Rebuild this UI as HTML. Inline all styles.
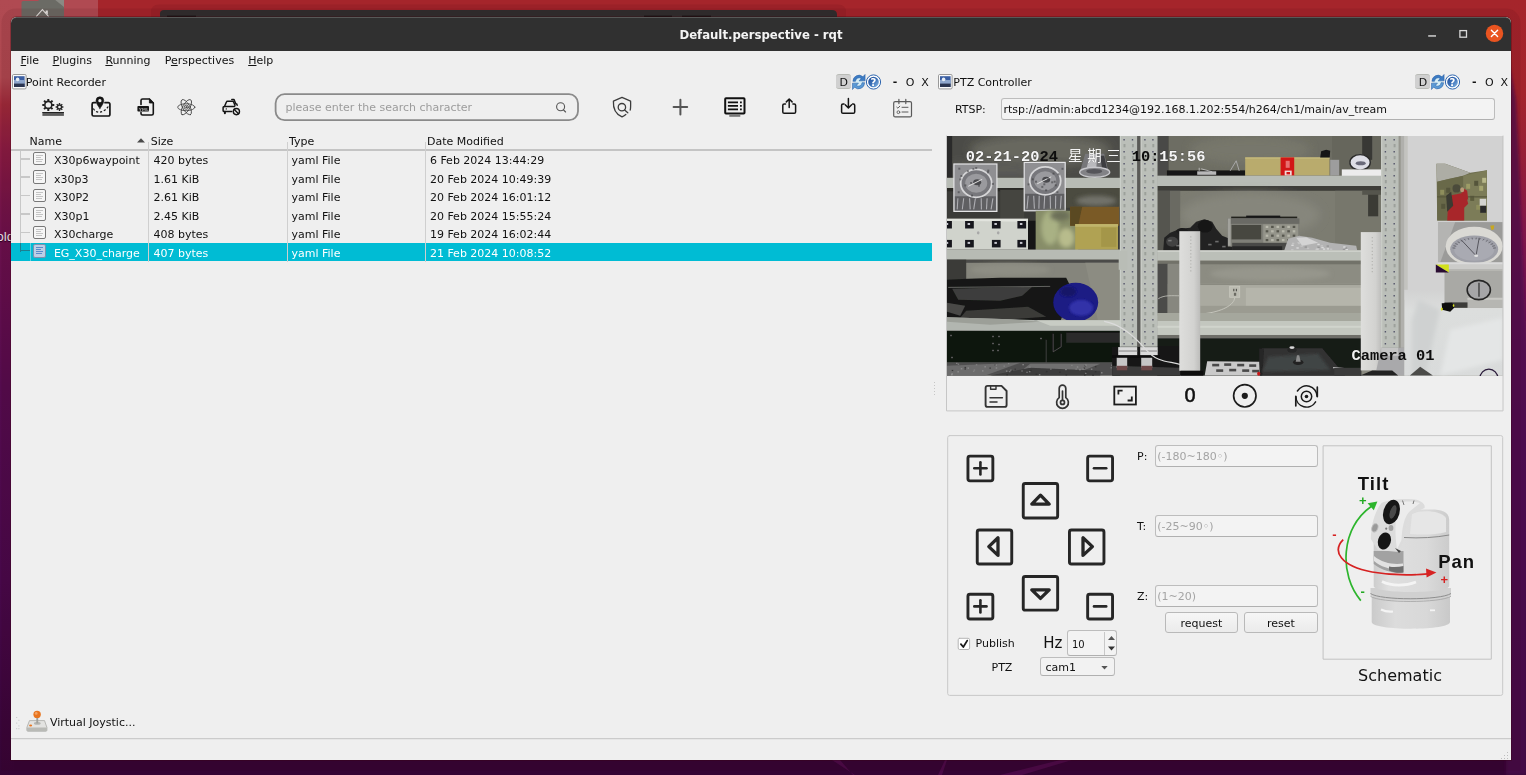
<!DOCTYPE html>
<html lang="en">
<head>
<meta charset="utf-8">
<title>Default.perspective - rqt</title>
<style>
*{box-sizing:border-box;margin:0;padding:0}
html,body{width:1526px;height:775px;overflow:hidden}
body{position:relative;font-family:"DejaVu Sans","Liberation Sans",sans-serif;font-size:11px;color:#111;background:#340434}
.abs,#win div,#win svg,#win i,#win span{position:absolute}
#win u{position:static}
.t{position:absolute;white-space:nowrap;line-height:14px;height:14px}
u{text-decoration:underline;text-underline-offset:1px}
/* wallpaper */
#wp{left:0;top:0;width:1526px;height:775px}
/* window */
#win{will-change:transform;left:11px;top:17px;width:1500px;height:743px;background:#efefef;border-radius:5.5px 5.5px 0 0;overflow:hidden;box-shadow:0 0 0 1px rgba(60,0,10,.28),0 1px 0 9.5px rgba(50,0,10,.09)}
#tb{left:0;top:0;width:1500px;height:34px;background:#303030;border-top:1px solid #575857;border-radius:5.5px 5.5px 0 0}
#title{left:0;top:9px;width:1500px;text-align:center;font-family:"DejaVu Sans Condensed","DejaVu Sans","Liberation Sans",sans-serif;font-stretch:condensed;font-weight:bold;font-size:13px;color:#f4f4f4;line-height:16px;height:16px}

#title{top:10px}
.m{top:36.9px}
.hd{top:117.8px;color:#111;margin-left:-0.8px}
.r{color:#111}
.sel{color:#fff}
#hl{left:0;top:226px;width:921px;height:18.4px;background:#00bcd4}
.vs{top:124.5px;width:1px;height:120px;background:#cfcfcf}
.hline{left:0;top:132.3px;width:921px;height:1.4px;background:#c4c4c4}
.br{left:8.5px;width:10px;height:1.6px;background:#c8c8c8}
.fi{left:22.2px;width:12.8px;height:13.6px;border:1.1px solid #787878;border-radius:2px;background:#f6f6f6}
.fi i{left:2px;height:1px;background:#c4c4c4}

.dbtn{top:57px;width:15.2px;height:14.8px;background:#d0d0d0;border-radius:3px;border-top:1px solid #b9bbb6;border-bottom:1px solid #b9bbb6}
.dk{top:58.9px}
.inp{border:1px solid #bdbdbd;border-bottom-color:#b0b0b0;border-radius:3px;background:#f3f3f3}
.btn{border:1px solid #b9b9b9;border-radius:3px;background:linear-gradient(#f6f6f6,#ebebeb);text-align:center;font-size:11px;line-height:21.4px;color:#111}
.fis{background:#bccfe6 !important;border-color:#7d8fae !important}
.fis i{background:#5b8ccb !important}
.brs{background:#1d7f90 !important;height:1px !important}
</style>
</head>
<body>
<!-- ===== WALLPAPER ===== -->
<svg id="wp" class="abs" width="1526" height="775" viewBox="0 0 1526 775">
<defs>
<filter id="wb" x="-50%" y="-5%" width="200%" height="110%"><feGaussianBlur stdDeviation="1.6"/></filter>
<linearGradient id="gL" x1="0" y1="0" x2="0" y2="1">
<stop offset="0" stop-color="#b04a52"/><stop offset="0.1" stop-color="#ae4850"/><stop offset="0.135" stop-color="#9e2a3a"/><stop offset="0.19" stop-color="#8a1c42"/><stop offset="0.26" stop-color="#741448"/><stop offset="0.31" stop-color="#6a104c"/><stop offset="0.5" stop-color="#540b4e"/><stop offset="0.75" stop-color="#47084a"/><stop offset="1" stop-color="#340434"/>
</linearGradient>
<linearGradient id="gR" x1="0" y1="0" x2="0" y2="1">
<stop offset="0" stop-color="#a5252b"/><stop offset="0.12" stop-color="#a3242c"/><stop offset="0.2" stop-color="#961f36"/><stop offset="0.3" stop-color="#80174a"/><stop offset="0.42" stop-color="#6a1150"/><stop offset="0.58" stop-color="#500a52"/><stop offset="0.8" stop-color="#3e0642"/><stop offset="1" stop-color="#340434"/>
</linearGradient>
</defs>
<rect x="0" y="0" width="1526" height="775" fill="#340434"/>
<rect x="0" y="0" width="1526" height="60" fill="#a5252b"/>
<rect x="0" y="0" width="14" height="775" fill="url(#gL)"/>
<rect x="1508" y="0" width="18" height="775" fill="url(#gR)"/>
<path d="M1506 45L1516 100L1519 160L1522 240L1527 350V775H1506Z" fill="#4c0a4e" opacity="0.72" filter="url(#wb)"/>
<path d="M855 775L832 760H840L853 775ZM938 775L945 760H947L942 775ZM1000 775L1060 760H1072L1022 775Z" fill="#4a0a48"/>
</svg>

<!-- desktop items behind window -->
<svg class="abs" style="left:0;top:0" width="900" height="20" viewBox="0 0 900 20">
<rect x="14" y="0" width="84" height="17" fill="#b04a52"/>
<path d="M21.5 17V2.5Q21.5 1 23 1H38L41 -2H64V17Z" fill="#6b6b65"/>
<path d="M54 -1H64V7Z" fill="#8a8a84"/>
<path d="M36.2 16.5L42.4 9.6L48.6 16.5M46.2 13V11H47.3V14.2" fill="none" stroke="#e8e8e4" stroke-width="1.1"/>
<path d="M151 20V12Q151 4.5 159 4.5H838Q846 4.5 846 12V20Z" fill="#3a000c" opacity="0.09"/>
<path d="M160 17V13.5Q160 10 164 10H832Q836.5 10 837 14V17Z" fill="#2f2f2f"/>
<rect x="167" y="15.6" width="29" height="1.4" fill="#161616"/><rect x="644" y="15.6" width="28" height="1.4" fill="#161616"/><rect x="682" y="15.6" width="29" height="1.4" fill="#161616"/>
</svg>
<div class="t abs" style="left:-7.5px;top:228.5px;font-family:'Liberation Sans','DejaVu Sans',sans-serif;font-size:13.5px;line-height:16px;height:16px;color:#f0e8ee;text-shadow:0 1px 1px #200020">fold</div>
<!-- ===== MAIN WINDOW ===== -->
<div id="win" class="abs">
<div id="tb"></div>
<div id="title" class="t">Default.perspective - rqt</div>
<!-- menubar -->
<div class="t m" style="left:9.6px"><u>F</u>ile</div>
<div class="t m" style="left:41.6px"><u>P</u>lugins</div>
<div class="t m" style="left:94.4px"><u>R</u>unning</div>
<div class="t m" style="left:153.7px">P<u>e</u>rspectives</div>
<div class="t m" style="left:237.2px"><u>H</u>elp</div>
<!-- dock title: Point Recorder -->
<div class="t" style="left:14.8px;top:58.9px">Point Recorder</div>
<!-- left dock title -->
<svg style="left:0.6px;top:56.6px" width="15" height="16" viewBox="0 0 15 16"><rect x="0.5" y="0.5" width="13.6" height="14.4" rx="1.2" fill="#fbfbfb" stroke="#8e8e8e" stroke-width="0.9"/><rect x="2" y="2.2" width="10.6" height="10.8" fill="#3a5ea2"/><rect x="2" y="6" width="10.6" height="4" fill="#8ea6cc"/><rect x="2" y="9.6" width="10.6" height="3.4" fill="#2b3550"/><circle cx="5.6" cy="5.4" r="1.8" fill="#e6edf6"/></svg>
<div class="dbtn" style="left:825.0px"></div>
<div class="t dk" style="left:828.4px">D</div>
<svg style="left:841.0px;top:56.5px" width="30" height="16" viewBox="0 0 30 16"><defs><linearGradient id="hg0" x1="0" y1="0" x2="1" y2="1"><stop offset="0" stop-color="#244f96"/><stop offset="0.5" stop-color="#3a70b8"/><stop offset="1" stop-color="#8fbde6"/></linearGradient></defs><g transform="translate(6.7 8) scale(1.08 1.14) translate(-6.7 -8)"><circle cx="6.7" cy="8" r="4.4" fill="#d6eef6" stroke="none"/><path d="M1.3 7.4A5.6 5.6 0 0 1 10.6 3.4L12.6 1.4V7H7L9 5A3.3 3.3 0 0 0 3.7 7.4Z" fill="#3d7cc4" stroke="#2c62a6" stroke-width="0.5"/><path d="M12.2 8.6A5.6 5.6 0 0 1 2.9 12.6L0.9 14.6V9H6.5L4.5 11A3.3 3.3 0 0 0 9.8 8.6Z" fill="#5b9ad6" stroke="#2c62a6" stroke-width="0.5"/></g><circle cx="21.5" cy="8" r="7.1" fill="#fff" stroke="#2f66ae" stroke-width="1"/><circle cx="21.5" cy="8" r="5.3" fill="url(#hg0)"/><text x="21.5" y="11.7" text-anchor="middle" font-family="DejaVu Sans,Liberation Sans,sans-serif" font-weight="bold" font-size="10" fill="#fff">?</text></svg>
<div class="t dk" style="left:881.7px;font-weight:bold;margin-top:-0.7px">-</div>
<div class="t dk" style="left:894.7px">O</div>
<div class="t dk" style="left:910.3px">X</div>
<!-- right dock title -->
<svg style="left:927.2px;top:56.8px" width="15" height="16" viewBox="0 0 15 16"><rect x="0.5" y="0.5" width="13.6" height="14.4" rx="1.2" fill="#fbfbfb" stroke="#8e8e8e" stroke-width="0.9"/><rect x="2" y="2.2" width="10.6" height="10.8" fill="#3a5ea2"/><rect x="2" y="6" width="10.6" height="4" fill="#8ea6cc"/><rect x="2" y="9.6" width="10.6" height="3.4" fill="#2b3550"/><circle cx="5.6" cy="5.4" r="1.8" fill="#e6edf6"/></svg>
<div class="t dk" style="left:942.3px">PTZ Controller</div>
<div class="dbtn" style="left:1404.3px"></div>
<div class="t dk" style="left:1407.7px">D</div>
<svg style="left:1420.3px;top:56.5px" width="30" height="16" viewBox="0 0 30 16"><defs><linearGradient id="hg579" x1="0" y1="0" x2="1" y2="1"><stop offset="0" stop-color="#244f96"/><stop offset="0.5" stop-color="#3a70b8"/><stop offset="1" stop-color="#8fbde6"/></linearGradient></defs><g transform="translate(6.7 8) scale(1.08 1.14) translate(-6.7 -8)"><circle cx="6.7" cy="8" r="4.4" fill="#d6eef6" stroke="none"/><path d="M1.3 7.4A5.6 5.6 0 0 1 10.6 3.4L12.6 1.4V7H7L9 5A3.3 3.3 0 0 0 3.7 7.4Z" fill="#3d7cc4" stroke="#2c62a6" stroke-width="0.5"/><path d="M12.2 8.6A5.6 5.6 0 0 1 2.9 12.6L0.9 14.6V9H6.5L4.5 11A3.3 3.3 0 0 0 9.8 8.6Z" fill="#5b9ad6" stroke="#2c62a6" stroke-width="0.5"/></g><circle cx="21.5" cy="8" r="7.1" fill="#fff" stroke="#2f66ae" stroke-width="1"/><circle cx="21.5" cy="8" r="5.3" fill="url(#hg579)"/><text x="21.5" y="11.7" text-anchor="middle" font-family="DejaVu Sans,Liberation Sans,sans-serif" font-weight="bold" font-size="10" fill="#fff">?</text></svg>
<div class="t dk" style="left:1461.0px;font-weight:bold;margin-top:-0.7px">-</div>
<div class="t dk" style="left:1474.0px">O</div>
<div class="t dk" style="left:1489.6px">X</div>
<!-- RTSP row -->
<div class="t" style="left:943.9px;top:85.8px">RTSP:</div>
<div class="inp" style="left:989.5px;top:81.2px;width:494.3px;height:22.2px"></div>
<div class="t" style="left:992.4px;top:85.8px">rtsp://admin:abcd1234@192.168.1.202:554/h264/ch1/main/av_tream</div>
<!-- CAM_START -->
<svg id="cam" style="left:935.8px;top:119.2px" width="555.9" height="239.6" viewBox="946.8 136.2 555.9 239.6">
<defs><filter id="b1" x="-20%" y="-20%" width="140%" height="140%"><feGaussianBlur stdDeviation="1"/></filter><filter id="b2" x="-30%" y="-30%" width="160%" height="160%"><feGaussianBlur stdDeviation="2.2"/></filter><filter id="b4" x="-30%" y="-50%" width="160%" height="200%"><feGaussianBlur stdDeviation="5"/></filter><filter id="soft" x="0" y="0" width="100%" height="100%"><feGaussianBlur stdDeviation="0.55"/></filter><linearGradient id="pg" x1="0" y1="0" x2="1" y2="0"><stop offset="0" stop-color="#dededc"/><stop offset="0.7" stop-color="#d2d2d0"/><stop offset="1" stop-color="#bcbcba"/></linearGradient><linearGradient id="cl" x1="0" y1="0" x2="0" y2="1"><stop offset="0" stop-color="#d2d2d2"/><stop offset="0.25" stop-color="#dcdedd"/><stop offset="1" stop-color="#d9dbdb"/></linearGradient></defs>
<g filter="url(#soft)">
<rect x="946.8" y="136.2" width="555.9" height="239.6" fill="#8a8a80" />
<rect x="946.8" y="136.2" width="173.2" height="42.3" fill="#4c4c47" />
<ellipse cx="1040" cy="150" rx="70" ry="16" fill="#68685f" filter="url(#b4)"/>
<ellipse cx="1000" cy="170" rx="60" ry="8" fill="#5c5c58" filter="url(#b4)"/>
<rect x="946.8" y="136.0" width="5.2" height="44.0" fill="#2c2c2a" />
<polygon points="1085,154 1104,154 1108,171 1080,171" fill="#77777a" />
<polygon points="1090,154 1097,154 1096,170 1086,170" fill="#b9b9bd" />
<polygon points="1100,156 1104,156 1107,170 1102,170" fill="#3c3c40" />
<ellipse cx="1094.5" cy="172.5" rx="15" ry="5" fill="#828286" stroke="#c8c8cc" stroke-width="1.4"/>
<ellipse cx="1094" cy="171.5" rx="8" ry="2.4" fill="#55555a" />
<rect x="946.8" y="178.0" width="173.2" height="10.2" fill="#b8bcb5" />
<rect x="946.8" y="188.2" width="173.2" height="61.8" fill="#3b3b37" />
<rect x="946.8" y="188.2" width="173.2" height="3.3" fill="#2a2a28" />
<rect x="1000.0" y="190.0" width="24.0" height="29.0" fill="#45453f" />
<rect x="953.7" y="164.2" width="43.0" height="47.4" fill="#8f8f92" stroke="#e4e4e6" stroke-width="1.2"/>
<rect x="954.7" y="196.5" width="41.0" height="14.1" fill="#5e5e62" />
<path d="M957.7 198.5L957.0 209.6" fill="none" stroke="#c8c8cc" stroke-width="1.1" opacity="0.75"/>
<path d="M963.5 198.5L962.1 209.6" fill="none" stroke="#c8c8cc" stroke-width="1.1" opacity="0.75"/>
<path d="M969.4 198.5L970.0 209.6" fill="none" stroke="#c8c8cc" stroke-width="1.1" opacity="0.75"/>
<path d="M975.2 198.5L973.5 209.6" fill="none" stroke="#c8c8cc" stroke-width="1.1" opacity="0.75"/>
<path d="M981.0 198.5L981.2 209.6" fill="none" stroke="#c8c8cc" stroke-width="1.1" opacity="0.75"/>
<path d="M986.9 198.5L986.3 209.6" fill="none" stroke="#c8c8cc" stroke-width="1.1" opacity="0.75"/>
<path d="M992.7 198.5L990.9 209.6" fill="none" stroke="#c8c8cc" stroke-width="1.1" opacity="0.75"/>
<ellipse cx="976" cy="183.5" rx="15.5" ry="14" fill="#77777b" stroke="#d6d6d8" stroke-width="1.8"/>
<ellipse cx="976" cy="183.5" rx="11" ry="9.5" fill="#9a9a9e" />
<ellipse cx="977" cy="182.5" rx="4" ry="3" fill="#4a4a4e" />
<path d="M968 186.5L982 179.5" fill="none" stroke="#e0e0e0" stroke-width="1" />
<rect x="975.0" y="167.3" width="2.0" height="2.0" fill="#3a3a3e" opacity="0.55"/>
<rect x="972.2" y="168.2" width="2.0" height="2.0" fill="#3a3a3e" opacity="0.55"/>
<rect x="959.1" y="178.6" width="2.0" height="2.0" fill="#3a3a3e" opacity="0.55"/>
<rect x="987.1" y="169.8" width="2.0" height="2.0" fill="#3a3a3e" opacity="0.55"/>
<rect x="964.2" y="184.6" width="2.0" height="2.0" fill="#3a3a3e" opacity="0.55"/>
<rect x="991.7" y="183.1" width="2.0" height="2.0" fill="#3a3a3e" opacity="0.55"/>
<rect x="970.8" y="194.8" width="2.0" height="2.0" fill="#3a3a3e" opacity="0.55"/>
<rect x="957.5" y="191.4" width="2.0" height="2.0" fill="#3a3a3e" opacity="0.55"/>
<rect x="966.7" y="170.4" width="2.0" height="2.0" fill="#3a3a3e" opacity="0.55"/>
<rect x="960.2" y="175.2" width="2.0" height="2.0" fill="#3a3a3e" opacity="0.55"/>
<rect x="986.7" y="171.5" width="2.0" height="2.0" fill="#3a3a3e" opacity="0.55"/>
<rect x="977.8" y="184.9" width="2.0" height="2.0" fill="#3a3a3e" opacity="0.55"/>
<rect x="969.9" y="182.2" width="2.0" height="2.0" fill="#3a3a3e" opacity="0.55"/>
<rect x="958.1" y="167.9" width="2.0" height="2.0" fill="#3a3a3e" opacity="0.55"/>
<rect x="1024.0" y="162.6" width="41.0" height="48.4" fill="#8f8f92" stroke="#e4e4e6" stroke-width="1.2"/>
<rect x="1025.0" y="194.0" width="39.0" height="16.0" fill="#5e5e62" />
<path d="M1028.0 196L1026.8 209" fill="none" stroke="#c8c8cc" stroke-width="1.1" opacity="0.75"/>
<path d="M1033.5 196L1034.2 209" fill="none" stroke="#c8c8cc" stroke-width="1.1" opacity="0.75"/>
<path d="M1039.0 196L1038.7 209" fill="none" stroke="#c8c8cc" stroke-width="1.1" opacity="0.75"/>
<path d="M1044.5 196L1043.8 209" fill="none" stroke="#c8c8cc" stroke-width="1.1" opacity="0.75"/>
<path d="M1050.0 196L1050.3 209" fill="none" stroke="#c8c8cc" stroke-width="1.1" opacity="0.75"/>
<path d="M1055.5 196L1055.3 209" fill="none" stroke="#c8c8cc" stroke-width="1.1" opacity="0.75"/>
<path d="M1061.0 196L1060.2 209" fill="none" stroke="#c8c8cc" stroke-width="1.1" opacity="0.75"/>
<ellipse cx="1045" cy="181" rx="15.5" ry="14" fill="#77777b" stroke="#d6d6d8" stroke-width="1.8"/>
<ellipse cx="1045" cy="181" rx="11" ry="9.5" fill="#9a9a9e" />
<ellipse cx="1046" cy="180" rx="4" ry="3" fill="#4a4a4e" />
<path d="M1037 184L1051 177" fill="none" stroke="#e0e0e0" stroke-width="1" />
<rect x="1054.6" y="184.5" width="2.0" height="2.0" fill="#3a3a3e" opacity="0.55"/>
<rect x="1034.8" y="180.9" width="2.0" height="2.0" fill="#3a3a3e" opacity="0.55"/>
<rect x="1044.9" y="189.5" width="2.0" height="2.0" fill="#3a3a3e" opacity="0.55"/>
<rect x="1052.3" y="172.8" width="2.0" height="2.0" fill="#3a3a3e" opacity="0.55"/>
<rect x="1061.3" y="168.0" width="2.0" height="2.0" fill="#3a3a3e" opacity="0.55"/>
<rect x="1041.1" y="186.1" width="2.0" height="2.0" fill="#3a3a3e" opacity="0.55"/>
<rect x="1031.5" y="178.5" width="2.0" height="2.0" fill="#3a3a3e" opacity="0.55"/>
<rect x="1027.4" y="183.6" width="2.0" height="2.0" fill="#3a3a3e" opacity="0.55"/>
<rect x="1053.5" y="180.9" width="2.0" height="2.0" fill="#3a3a3e" opacity="0.55"/>
<rect x="1057.5" y="173.5" width="2.0" height="2.0" fill="#3a3a3e" opacity="0.55"/>
<rect x="1051.0" y="181.5" width="2.0" height="2.0" fill="#3a3a3e" opacity="0.55"/>
<rect x="1046.9" y="177.6" width="2.0" height="2.0" fill="#3a3a3e" opacity="0.55"/>
<rect x="1056.2" y="191.4" width="2.0" height="2.0" fill="#3a3a3e" opacity="0.55"/>
<rect x="1043.1" y="183.5" width="2.0" height="2.0" fill="#3a3a3e" opacity="0.55"/>
<rect x="946.8" y="219.0" width="81.0" height="30.8" fill="#d0d3cc" />
<polygon points="946.8,219 1027.8,219 1027.8,222 946.8,221" fill="#e2e4de" />
<rect x="943.0" y="221.2" width="8.7" height="7.5" fill="#15151c" />
<rect x="945.5" y="223.2" width="2.5" height="2.0" fill="#c8c8d0" />
<rect x="964.9" y="221.2" width="8.7" height="7.5" fill="#15151c" />
<rect x="967.4" y="223.2" width="2.5" height="2.0" fill="#c8c8d0" />
<rect x="991.7" y="221.2" width="8.7" height="7.5" fill="#15151c" />
<rect x="994.2" y="223.2" width="2.5" height="2.0" fill="#c8c8d0" />
<rect x="1017.2" y="221.2" width="8.7" height="7.5" fill="#15151c" />
<rect x="1019.7" y="223.2" width="2.5" height="2.0" fill="#c8c8d0" />
<rect x="943.0" y="240.1" width="8.7" height="7.5" fill="#15151c" />
<rect x="945.5" y="242.1" width="2.5" height="2.0" fill="#c8c8d0" />
<rect x="964.9" y="240.1" width="8.7" height="7.5" fill="#15151c" />
<rect x="967.4" y="242.1" width="2.5" height="2.0" fill="#c8c8d0" />
<rect x="991.7" y="240.1" width="8.7" height="7.5" fill="#15151c" />
<rect x="994.2" y="242.1" width="2.5" height="2.0" fill="#c8c8d0" />
<rect x="1017.2" y="240.1" width="8.7" height="7.5" fill="#15151c" />
<rect x="1019.7" y="242.1" width="2.5" height="2.0" fill="#c8c8d0" />
<ellipse cx="978" cy="233" rx="1.3" ry="1.6" fill="#a8a8a8" />
<ellipse cx="998" cy="233" rx="1.3" ry="1.6" fill="#a8a8a8" />
<rect x="1027.8" y="221.0" width="7.7" height="29.0" fill="#151515" />
<rect x="1035.5" y="211.0" width="42.5" height="39.0" fill="#878d68" />
<ellipse cx="1050" cy="228" rx="9" ry="17" fill="#a9b184" filter="url(#b2)"/>
<ellipse cx="1066" cy="238" rx="8" ry="10" fill="#b8bc8c" filter="url(#b2)"/>
<ellipse cx="1060" cy="216" rx="10" ry="5" fill="#6c7058" filter="url(#b2)"/>
<rect x="1066.0" y="188.2" width="54.0" height="19.8" fill="#4b4b40" />
<ellipse cx="1096" cy="201" rx="20" ry="5" fill="#72726a" filter="url(#b2)"/>
<rect x="1070.0" y="207.0" width="49.0" height="19.0" fill="#7a5a28" />
<polygon points="1070,207 1082,207 1078,226 1070,226" fill="#5a4820" />
<rect x="1075.0" y="224.3" width="42.8" height="25.6" fill="#b0a252" />
<rect x="1075.0" y="224.3" width="42.8" height="2.7" fill="#c0b46c" />
<rect x="1101.0" y="228.0" width="15.0" height="19.0" fill="#a49648" />
<rect x="946.8" y="249.8" width="173.2" height="10.1" fill="#b7bbb4" />
<rect x="946.8" y="259.9" width="173.2" height="62.1" fill="#85857c" />
<rect x="946.8" y="259.9" width="173.2" height="3.1" fill="#4c4c48" />
<rect x="946.8" y="259.9" width="19.2" height="22.1" fill="#3a3a38" />
<ellipse cx="1010" cy="270" rx="40" ry="6" fill="#8e8e84" filter="url(#b2)"/>
<polygon points="1085,263 1120,263 1120,322 1098,322" fill="#8c8c82" />
<polygon points="946.8,280 968,279 1000,278 1066,278 1072,290 1060,322 946.8,322" fill="#161816" />
<polygon points="952,289 1032,287 1022,296 1000,301 958,300" fill="#3e3e3c" />
<polygon points="966,311 1028,307 1046,317 990,321 960,318" fill="#3a3a38" />
<polygon points="946.8,303 965,306 960,316 946.8,312" fill="#484846" />
<path d="M948 287.6L1050 286.6" fill="none" stroke="#6a6a68" stroke-width="0.9" />
<ellipse cx="1075.5" cy="302.4" rx="22.5" ry="19.5" fill="#1b1b84" />
<ellipse cx="1081" cy="308" rx="12" ry="8" fill="#3030a8" filter="url(#b1)"/>
<ellipse cx="1068" cy="292" rx="8" ry="5" fill="#141468" filter="url(#b1)"/>
<polygon points="946.8,317.5 1040,320.5 1120,320.5 1120,332 946.8,331" fill="#b2b6b0" />
<polygon points="1036,320.5 1120,320.5 1120,326 1050,326" fill="#c8ccc4" />
<polygon points="946.8,317.5 1010,319.5 1040,322 990,325 946.8,322" fill="#9c9f98" />
<rect x="946.8" y="331.0" width="173.2" height="32.0" fill="#101311" />
<rect x="1066.0" y="333.0" width="54.0" height="10.0" fill="#2a2c2a" />
<rect x="992.0" y="336.0" width="1.6" height="1.4" fill="#6a6a6a" />
<rect x="998.0" y="336.0" width="1.6" height="1.4" fill="#6a6a6a" />
<rect x="992.0" y="343.0" width="1.6" height="1.4" fill="#6a6a6a" />
<rect x="998.0" y="344.0" width="1.6" height="1.4" fill="#6a6a6a" />
<rect x="992.0" y="350.0" width="1.6" height="1.4" fill="#6a6a6a" />
<rect x="997.0" y="350.0" width="1.6" height="1.4" fill="#6a6a6a" />
<rect x="1040.0" y="338.0" width="1.6" height="1.4" fill="#6a6a6a" />
<rect x="950.0" y="335.0" width="1.6" height="1.4" fill="#6a6a6a" />
<rect x="951.0" y="357.0" width="1.6" height="1.4" fill="#6a6a6a" />
<path d="M1053 334L1053 352L1061 347L1061 334" fill="none" stroke="#5a5a58" stroke-width="0.8" />
<path d="M1046 340L1046 364" fill="none" stroke="#4a4a48" stroke-width="0.8" />
<rect x="946.8" y="362.5" width="173.2" height="13.3" fill="#505050" />
<polygon points="946.8,366 1020,363 985,375.8 946.8,375.8" fill="#6c6c6c" />
<polygon points="1030,364 1100,364 1080,372 1020,372" fill="#707070" />
<polygon points="990,375.8 1030,368 1100,371 1100,375.8" fill="#3c3c3c" />
<rect x="957.2" y="371.4" width="1.5" height="1.2" fill="#9a9a9a" opacity="0.8"/>
<rect x="1045.7" y="371.2" width="1.5" height="1.2" fill="#2e2e2e" opacity="0.8"/>
<rect x="995.5" y="367.6" width="1.5" height="1.2" fill="#9a9a9a" opacity="0.8"/>
<rect x="1006.2" y="374.3" width="1.5" height="1.2" fill="#2e2e2e" opacity="0.8"/>
<rect x="975.6" y="364.4" width="1.5" height="1.2" fill="#8a8a8a" opacity="0.8"/>
<rect x="984.2" y="366.4" width="1.5" height="1.2" fill="#9a9a9a" opacity="0.8"/>
<rect x="989.2" y="367.7" width="1.5" height="1.2" fill="#2e2e2e" opacity="0.8"/>
<rect x="960.6" y="368.4" width="1.5" height="1.2" fill="#9a9a9a" opacity="0.8"/>
<rect x="994.4" y="364.6" width="1.5" height="1.2" fill="#2e2e2e" opacity="0.8"/>
<rect x="1094.7" y="366.3" width="1.5" height="1.2" fill="#2e2e2e" opacity="0.8"/>
<rect x="1115.7" y="371.2" width="1.5" height="1.2" fill="#2e2e2e" opacity="0.8"/>
<rect x="1110.8" y="364.8" width="1.5" height="1.2" fill="#8a8a8a" opacity="0.8"/>
<rect x="972.7" y="370.9" width="1.5" height="1.2" fill="#8a8a8a" opacity="0.8"/>
<rect x="1029.8" y="370.1" width="1.5" height="1.2" fill="#2e2e2e" opacity="0.8"/>
<rect x="995.1" y="364.7" width="1.5" height="1.2" fill="#9a9a9a" opacity="0.8"/>
<rect x="1010.0" y="369.8" width="1.5" height="1.2" fill="#8a8a8a" opacity="0.8"/>
<rect x="1065.0" y="369.2" width="1.5" height="1.2" fill="#9a9a9a" opacity="0.8"/>
<rect x="1058.9" y="371.9" width="1.5" height="1.2" fill="#2e2e2e" opacity="0.8"/>
<rect x="1100.8" y="372.4" width="1.5" height="1.2" fill="#9a9a9a" opacity="0.8"/>
<rect x="1083.4" y="367.7" width="1.5" height="1.2" fill="#2e2e2e" opacity="0.8"/>
<rect x="1014.3" y="368.8" width="1.5" height="1.2" fill="#2e2e2e" opacity="0.8"/>
<rect x="957.5" y="363.8" width="1.5" height="1.2" fill="#8a8a8a" opacity="0.8"/>
<rect x="1022.2" y="364.3" width="1.5" height="1.2" fill="#9a9a9a" opacity="0.8"/>
<rect x="955.8" y="363.0" width="1.5" height="1.2" fill="#8a8a8a" opacity="0.8"/>
<rect x="1038.7" y="374.4" width="1.5" height="1.2" fill="#9a9a9a" opacity="0.8"/>
<rect x="951.2" y="373.5" width="1.5" height="1.2" fill="#9a9a9a" opacity="0.8"/>
<rect x="1011.2" y="370.6" width="1.5" height="1.2" fill="#2e2e2e" opacity="0.8"/>
<rect x="1049.9" y="368.7" width="1.5" height="1.2" fill="#8a8a8a" opacity="0.8"/>
<rect x="1092.1" y="374.9" width="1.5" height="1.2" fill="#2e2e2e" opacity="0.8"/>
<rect x="1029.0" y="366.7" width="1.5" height="1.2" fill="#8a8a8a" opacity="0.8"/>
<rect x="964.3" y="367.1" width="1.5" height="1.2" fill="#2e2e2e" opacity="0.8"/>
<rect x="1028.7" y="371.3" width="1.5" height="1.2" fill="#9a9a9a" opacity="0.8"/>
<rect x="950.8" y="374.4" width="1.5" height="1.2" fill="#9a9a9a" opacity="0.8"/>
<rect x="1008.7" y="371.3" width="1.5" height="1.2" fill="#8a8a8a" opacity="0.8"/>
<rect x="1076.6" y="366.6" width="1.5" height="1.2" fill="#9a9a9a" opacity="0.8"/>
<rect x="1094.6" y="371.4" width="1.5" height="1.2" fill="#2e2e2e" opacity="0.8"/>
<rect x="1035.5" y="373.9" width="1.5" height="1.2" fill="#2e2e2e" opacity="0.8"/>
<rect x="1079.0" y="369.4" width="1.5" height="1.2" fill="#9a9a9a" opacity="0.8"/>
<rect x="1003.2" y="365.7" width="1.5" height="1.2" fill="#8a8a8a" opacity="0.8"/>
<rect x="1084.8" y="372.8" width="1.5" height="1.2" fill="#9a9a9a" opacity="0.8"/>
<rect x="1084.3" y="365.4" width="1.5" height="1.2" fill="#2e2e2e" opacity="0.8"/>
<rect x="1007.7" y="363.3" width="1.5" height="1.2" fill="#8a8a8a" opacity="0.8"/>
<rect x="1082.1" y="368.7" width="1.5" height="1.2" fill="#8a8a8a" opacity="0.8"/>
<rect x="1065.4" y="374.5" width="1.5" height="1.2" fill="#2e2e2e" opacity="0.8"/>
<rect x="1085.2" y="371.7" width="1.5" height="1.2" fill="#2e2e2e" opacity="0.8"/>
<rect x="1110.3" y="367.4" width="1.5" height="1.2" fill="#8a8a8a" opacity="0.8"/>
<rect x="964.3" y="368.6" width="1.5" height="1.2" fill="#2e2e2e" opacity="0.8"/>
<rect x="981.8" y="370.5" width="1.5" height="1.2" fill="#9a9a9a" opacity="0.8"/>
<rect x="1090.7" y="368.8" width="1.5" height="1.2" fill="#9a9a9a" opacity="0.8"/>
<rect x="1005.7" y="370.7" width="1.5" height="1.2" fill="#9a9a9a" opacity="0.8"/>
<rect x="967.3" y="367.7" width="1.5" height="1.2" fill="#9a9a9a" opacity="0.8"/>
<rect x="1075.2" y="368.7" width="1.5" height="1.2" fill="#8a8a8a" opacity="0.8"/>
<rect x="1021.1" y="370.6" width="1.5" height="1.2" fill="#8a8a8a" opacity="0.8"/>
<rect x="1083.9" y="374.7" width="1.5" height="1.2" fill="#2e2e2e" opacity="0.8"/>
<rect x="1026.1" y="371.9" width="1.5" height="1.2" fill="#8a8a8a" opacity="0.8"/>
<rect x="1070.9" y="365.0" width="1.5" height="1.2" fill="#8a8a8a" opacity="0.8"/>
<rect x="951.5" y="370.1" width="1.5" height="1.2" fill="#2e2e2e" opacity="0.8"/>
<rect x="1084.9" y="364.8" width="1.5" height="1.2" fill="#9a9a9a" opacity="0.8"/>
<rect x="1114.6" y="370.9" width="1.5" height="1.2" fill="#2e2e2e" opacity="0.8"/>
<rect x="973.5" y="369.6" width="1.5" height="1.2" fill="#8a8a8a" opacity="0.8"/>
<rect x="1157.0" y="136.2" width="224.0" height="39.8" fill="#6d6d63" />
<ellipse cx="1250" cy="150" rx="60" ry="14" fill="#77776c" filter="url(#b4)"/>
<rect x="1157.0" y="136.2" width="11.5" height="39.8" fill="#4a4a46" />
<rect x="1332.0" y="136.2" width="49.0" height="39.8" fill="#66665c" />
<rect x="1362.0" y="136.2" width="10.0" height="23.8" fill="#383834" />
<rect x="1166.7" y="170.6" width="78.3" height="5.4" fill="#141414" />
<rect x="1197.0" y="171.5" width="19.0" height="3.5" fill="#b8b8b8" />
<path d="M1230 171L1236 161L1239 171" fill="none" stroke="#a8a8a8" stroke-width="1" />
<path d="M1199 168L1199 171M1201 169L1212 172" fill="none" stroke="#c8c8c8" stroke-width="0.8" />
<rect x="1245.0" y="157.6" width="84.3" height="18.1" fill="#b9ab6d" />
<rect x="1245.0" y="157.6" width="84.3" height="1.4" fill="#c4b87c" />
<rect x="1280.4" y="157.6" width="13.6" height="18.1" fill="#d21717" />
<rect x="1284.5" y="170.8" width="7.0" height="4.9" fill="#f0d8d8" />
<rect x="1286.3" y="172.2" width="3.5" height="2.4" fill="#d21717" />
<rect x="1285.5" y="161.0" width="4.0" height="7.0" fill="#e87070" />
<polygon points="1320,157.6 1321,151.5 1326,150 1330,151 1329.5,157.6" fill="#161616" />
<rect x="1330.0" y="160.0" width="9.0" height="15.7" fill="#9d9d9d" />
<ellipse cx="1359.9" cy="162.6" rx="10.2" ry="7.8" fill="#dedee6" stroke="#2c2c2c" stroke-width="1.4"/>
<ellipse cx="1360.5" cy="163.5" rx="5" ry="2" fill="#6a6a7a" />
<rect x="1341.6" y="169.6" width="39.4" height="6.7" fill="#ececec" />
<rect x="1157.0" y="175.9" width="224.0" height="10.3" fill="#b8bcb6" />
<rect x="1157.0" y="186.2" width="224.0" height="64.8" fill="#7b7b71" />
<rect x="1157.0" y="186.2" width="224.0" height="4.8" fill="#3d3d39" />
<ellipse cx="1250" cy="215" rx="70" ry="22" fill="#86867b" filter="url(#b4)"/>
<rect x="1157.0" y="191.0" width="13.0" height="60.0" fill="#55554f" />
<rect x="1170.0" y="191.0" width="10.0" height="60.0" fill="#6a6a62" />
<rect x="1335.0" y="191.0" width="46.0" height="60.0" fill="#77776c" />
<rect x="1367.9" y="192.0" width="10.1" height="24.5" fill="#3a3a36" />
<rect x="1362.0" y="191.0" width="19.0" height="4.0" fill="#55554d" />
<polygon points="1163,250.6 1164,238 1170,233 1180,229 1190,228 1196,222 1204,219.5 1212,222 1216,229 1222,236 1232,240 1258,243 1262,250.6" fill="#242424" />
<ellipse cx="1205" cy="226.5" rx="7.5" ry="6.5" fill="#191919" />
<ellipse cx="1182" cy="231.5" rx="6" ry="3.2" fill="#1c1c1c" />
<ellipse cx="1172" cy="242" rx="6" ry="5" fill="#505050" opacity="0.7"/>
<rect x="1168.0" y="240.0" width="3.4" height="1.6" fill="#8e8e8e" opacity="0.7"/>
<rect x="1176.0" y="245.0" width="3.4" height="1.6" fill="#8e8e8e" opacity="0.7"/>
<rect x="1186.0" y="243.0" width="3.4" height="1.6" fill="#8e8e8e" opacity="0.7"/>
<rect x="1194.0" y="238.0" width="3.4" height="1.6" fill="#8e8e8e" opacity="0.7"/>
<rect x="1215.0" y="241.0" width="3.4" height="1.6" fill="#8e8e8e" opacity="0.7"/>
<rect x="1222.0" y="246.0" width="3.4" height="1.6" fill="#8e8e8e" opacity="0.7"/>
<rect x="1240.0" y="247.0" width="3.4" height="1.6" fill="#8e8e8e" opacity="0.7"/>
<rect x="1252.0" y="245.0" width="3.4" height="1.6" fill="#8e8e8e" opacity="0.7"/>
<rect x="1208.0" y="244.0" width="3.4" height="1.6" fill="#8e8e8e" opacity="0.7"/>
<rect x="1230.0" y="245.0" width="3.4" height="1.6" fill="#8e8e8e" opacity="0.7"/>
<rect x="1227.7" y="218.6" width="71.5" height="28.2" fill="#7f7f78" />
<rect x="1231.0" y="216.8" width="66.0" height="1.8" fill="#20201e" />
<rect x="1246.0" y="215.8" width="34.0" height="1.8" fill="#151515" />
<rect x="1227.7" y="218.6" width="71.5" height="5.4" fill="#6b6b65" />
<rect x="1227.7" y="218.6" width="2.8" height="27.4" fill="#a2a29c" />
<rect x="1231.4" y="225.2" width="29.6" height="14.4" fill="#474741" />
<rect x="1263.0" y="224.5" width="35.0" height="19.5" fill="#94948a" />
<rect x="1265.5" y="226.0" width="2.6" height="2.2" fill="#b8b8ac" />
<rect x="1270.9" y="226.0" width="2.6" height="2.2" fill="#56564e" />
<rect x="1276.3" y="226.0" width="2.6" height="2.2" fill="#b8b8ac" />
<rect x="1281.7" y="226.0" width="2.6" height="2.2" fill="#56564e" />
<rect x="1287.1" y="226.0" width="2.6" height="2.2" fill="#b8b8ac" />
<rect x="1292.5" y="226.0" width="2.6" height="2.2" fill="#56564e" />
<rect x="1265.5" y="230.4" width="2.6" height="2.2" fill="#56564e" />
<rect x="1270.9" y="230.4" width="2.6" height="2.2" fill="#b8b8ac" />
<rect x="1276.3" y="230.4" width="2.6" height="2.2" fill="#56564e" />
<rect x="1281.7" y="230.4" width="2.6" height="2.2" fill="#b8b8ac" />
<rect x="1287.1" y="230.4" width="2.6" height="2.2" fill="#56564e" />
<rect x="1292.5" y="230.4" width="2.6" height="2.2" fill="#b8b8ac" />
<rect x="1265.5" y="234.8" width="2.6" height="2.2" fill="#b8b8ac" />
<rect x="1270.9" y="234.8" width="2.6" height="2.2" fill="#56564e" />
<rect x="1276.3" y="234.8" width="2.6" height="2.2" fill="#b8b8ac" />
<rect x="1281.7" y="234.8" width="2.6" height="2.2" fill="#56564e" />
<rect x="1287.1" y="234.8" width="2.6" height="2.2" fill="#b8b8ac" />
<rect x="1292.5" y="234.8" width="2.6" height="2.2" fill="#56564e" />
<rect x="1265.5" y="239.2" width="2.6" height="2.2" fill="#56564e" />
<rect x="1270.9" y="239.2" width="2.6" height="2.2" fill="#b8b8ac" />
<rect x="1276.3" y="239.2" width="2.6" height="2.2" fill="#56564e" />
<rect x="1281.7" y="239.2" width="2.6" height="2.2" fill="#b8b8ac" />
<rect x="1287.1" y="239.2" width="2.6" height="2.2" fill="#56564e" />
<rect x="1292.5" y="239.2" width="2.6" height="2.2" fill="#b8b8ac" />
<rect x="1232.0" y="243.0" width="68.0" height="7.6" fill="#4a4a46" />
<rect x="1232.0" y="246.5" width="50.0" height="4.1" fill="#262626" />
<polygon points="1288,239 1299,236 1312,238 1330,243 1356,246 1357,250.6 1284,250.6" fill="#b3b3b3" />
<polygon points="1296,238 1306,237.5 1318,243 1302,246" fill="#d4d4d4" />
<rect x="1290.9" y="249.3" width="2.4" height="1.4" fill="#c8c8c8" opacity="0.8"/>
<rect x="1296.2" y="247.5" width="2.4" height="1.4" fill="#e4e4e4" opacity="0.8"/>
<rect x="1316.0" y="248.7" width="2.4" height="1.4" fill="#e4e4e4" opacity="0.8"/>
<rect x="1291.7" y="242.9" width="2.4" height="1.4" fill="#c8c8c8" opacity="0.8"/>
<rect x="1304.4" y="246.6" width="2.4" height="1.4" fill="#8c8c8c" opacity="0.8"/>
<rect x="1322.7" y="248.6" width="2.4" height="1.4" fill="#e4e4e4" opacity="0.8"/>
<rect x="1344.6" y="247.5" width="2.4" height="1.4" fill="#8c8c8c" opacity="0.8"/>
<rect x="1329.7" y="248.7" width="2.4" height="1.4" fill="#c8c8c8" opacity="0.8"/>
<rect x="1315.2" y="249.0" width="2.4" height="1.4" fill="#c8c8c8" opacity="0.8"/>
<rect x="1297.8" y="243.0" width="2.4" height="1.4" fill="#c8c8c8" opacity="0.8"/>
<rect x="1291.1" y="244.8" width="2.4" height="1.4" fill="#e4e4e4" opacity="0.8"/>
<rect x="1326.5" y="248.4" width="2.4" height="1.4" fill="#e4e4e4" opacity="0.8"/>
<rect x="1300.3" y="245.6" width="2.4" height="1.4" fill="#c8c8c8" opacity="0.8"/>
<rect x="1297.2" y="242.2" width="2.4" height="1.4" fill="#c8c8c8" opacity="0.8"/>
<rect x="1321.1" y="247.1" width="2.4" height="1.4" fill="#e4e4e4" opacity="0.8"/>
<rect x="1343.0" y="246.5" width="2.4" height="1.4" fill="#e4e4e4" opacity="0.8"/>
<rect x="1306.6" y="247.9" width="2.4" height="1.4" fill="#c8c8c8" opacity="0.8"/>
<rect x="1317.1" y="243.9" width="2.4" height="1.4" fill="#e4e4e4" opacity="0.8"/>
<rect x="1316.6" y="247.2" width="2.4" height="1.4" fill="#c8c8c8" opacity="0.8"/>
<rect x="1326.4" y="245.6" width="2.4" height="1.4" fill="#8c8c8c" opacity="0.8"/>
<rect x="1317.1" y="246.8" width="2.4" height="1.4" fill="#8c8c8c" opacity="0.8"/>
<rect x="1320.5" y="245.4" width="2.4" height="1.4" fill="#c8c8c8" opacity="0.8"/>
<rect x="1342.6" y="249.3" width="2.4" height="1.4" fill="#8c8c8c" opacity="0.8"/>
<rect x="1345.4" y="249.2" width="2.4" height="1.4" fill="#e4e4e4" opacity="0.8"/>
<rect x="1157.0" y="250.6" width="204.0" height="10.4" fill="#bbbfb8" />
<rect x="1157.0" y="250.6" width="204.0" height="1.4" fill="#d2d5cf" />
<rect x="1157.0" y="261.0" width="204.0" height="55.0" fill="#a3a399" />
<rect x="1157.0" y="261.0" width="204.0" height="23.0" fill="#8c8c82" />
<ellipse cx="1270" cy="274" rx="60" ry="7" fill="#96968c" filter="url(#b2)"/>
<rect x="1157.0" y="261.0" width="204.0" height="3.5" fill="#727269" />
<rect x="1157.0" y="264.0" width="10.5" height="52.0" fill="#4b4b49" />
<rect x="1167.5" y="264.0" width="12.5" height="52.0" fill="#87877f" />
<rect x="1200.0" y="284.0" width="161.0" height="1.3" fill="#8a8a80" />
<rect x="1200.0" y="285.3" width="161.0" height="27.7" fill="#aaaaa0" />
<rect x="1245.7" y="288.0" width="115.3" height="22.5" fill="#b5b5ab" />
<rect x="1200.0" y="306.0" width="161.0" height="7.5" fill="#9b9b91" />
<rect x="1229.5" y="286.5" width="10.0" height="11.0" fill="#bcbcb2" stroke="#c8c8be" stroke-width="0.8"/>
<rect x="1233.0" y="289.0" width="1.2" height="2.5" fill="#55554f" />
<rect x="1235.6" y="289.0" width="1.2" height="2.5" fill="#55554f" />
<rect x="1233.7" y="293.0" width="2.3" height="3.0" fill="#6a6a62" />
<path d="M1234.5 298C1234 305 1222 312 1203 314" fill="none" stroke="#c8c8c0" stroke-width="0.9" />
<rect x="1157.0" y="313.2" width="204.0" height="8.0" fill="#a5a79d" />
<rect x="1157.0" y="321.2" width="204.0" height="14.0" fill="#c3c7bf" />
<rect x="1157.0" y="326.0" width="204.0" height="2.0" fill="#d0d4cc" />
<rect x="1157.0" y="335.2" width="204.0" height="40.6" fill="#181a18" />
<rect x="1157.0" y="335.2" width="204.0" height="3.4" fill="#6e6e68" />
<polygon points="1262,348.5 1322,348.5 1345,375.8 1259,375.8" fill="#333333" />
<polygon points="1259,349 1264,348.5 1262,375.8 1259,375.8" fill="#252525" />
<polygon points="1268,357 1318,354 1330,370 1262,372" fill="#404444" filter="url(#b1)"/>
<ellipse cx="1291.8" cy="350.2" rx="4.6" ry="2.6" fill="#262626" />
<ellipse cx="1291.8" cy="347.8" rx="2.6" ry="1.3" fill="#d8d8d8" />
<ellipse cx="1298" cy="362.5" rx="5.2" ry="2.8" fill="#222" />
<polygon points="1296.8,355.5 1299,355.5 1300.5,362 1295.5,362" fill="#8c8c8c" />
<polygon points="1207,361.5 1259,362 1259.5,375.8 1204.5,375.8" fill="#c9c9c9" />
<rect x="1212.0" y="364.0" width="7.0" height="2.6" fill="#4a4a4a" />
<rect x="1224.0" y="363.5" width="7.0" height="2.6" fill="#4a4a4a" />
<rect x="1237.0" y="364.0" width="7.0" height="2.6" fill="#4a4a4a" />
<rect x="1249.0" y="364.5" width="7.0" height="2.6" fill="#4a4a4a" />
<rect x="1216.0" y="369.5" width="7.0" height="2.6" fill="#4a4a4a" />
<rect x="1229.0" y="369.0" width="7.0" height="2.6" fill="#4a4a4a" />
<rect x="1242.0" y="369.5" width="7.0" height="2.6" fill="#4a4a4a" />
<rect x="1252.0" y="370.0" width="7.0" height="2.6" fill="#4a4a4a" />
<ellipse cx="1258.5" cy="374" rx="1.6" ry="2" fill="#c81818" />
<path d="M1333 367.8L1361 370.2" fill="none" stroke="#cfcfcf" stroke-width="1.2" />
<rect x="1334.0" y="368.0" width="27.0" height="7.8" fill="#3a3a3a" />
<rect x="1135.8" y="136.2" width="4.8" height="210.8" fill="#5a5a57" />
<rect x="1119.7" y="136.2" width="17.2" height="211.3" fill="#bbbfb9" />
<rect x="1119.7" y="136.2" width="1.0" height="211.3" fill="#cdd1cb" />
<path d="M1123.9 139.2V345.5" fill="none" stroke="#3a3a55" stroke-width="1.4" stroke-dasharray="1.5 10.5" opacity="0.8"/>
<path d="M1124.3 144.2V345.5" fill="none" stroke="#979b95" stroke-width="1.9" stroke-dasharray="3.2 8.8" opacity="0.85"/>
<path d="M1132.3 139.2V345.5" fill="none" stroke="#3a3a55" stroke-width="1.4" stroke-dasharray="1.5 10.5" opacity="0.8"/>
<path d="M1132.7 144.2V345.5" fill="none" stroke="#979b95" stroke-width="1.9" stroke-dasharray="3.2 8.8" opacity="0.85"/>
<rect x="1140.5" y="136.2" width="16.8" height="211.3" fill="#bbbfb9" />
<rect x="1140.5" y="136.2" width="1.0" height="211.3" fill="#cdd1cb" />
<path d="M1144.7 139.2V345.5" fill="none" stroke="#3a3a55" stroke-width="1.4" stroke-dasharray="1.5 10.5" opacity="0.8"/>
<path d="M1145.1 144.2V345.5" fill="none" stroke="#979b95" stroke-width="1.9" stroke-dasharray="3.2 8.8" opacity="0.85"/>
<path d="M1152.7 139.2V345.5" fill="none" stroke="#3a3a55" stroke-width="1.4" stroke-dasharray="1.5 10.5" opacity="0.8"/>
<path d="M1153.1 144.2V345.5" fill="none" stroke="#979b95" stroke-width="1.9" stroke-dasharray="3.2 8.8" opacity="0.85"/>
<rect x="1112.0" y="347.0" width="68.0" height="28.8" fill="#141614" />
<polygon points="1112,366 1180,368 1180,375.8 1112,375.8" fill="#3a3a3a" />
<rect x="1118.5" y="251.0" width="8.5" height="19.0" fill="#b9bdb6" />
<rect x="1118.0" y="347.3" width="19.0" height="8.2" fill="#dadada" />
<rect x="1140.0" y="347.3" width="17.5" height="8.2" fill="#dadada" />
<rect x="1118.0" y="350.5" width="19.0" height="1.5" fill="#a0a0a0" />
<rect x="1140.0" y="350.5" width="17.5" height="1.5" fill="#a0a0a0" />
<rect x="1112.0" y="355.5" width="48.0" height="2.5" fill="#0f0f0f" />
<rect x="1116.5" y="358.0" width="10.5" height="10.0" fill="#c6c6c6" />
<rect x="1141.0" y="358.0" width="11.0" height="10.0" fill="#c6c6c6" />
<rect x="1116.5" y="366.0" width="10.5" height="4.5" fill="#6e4a4a" />
<rect x="1141.0" y="366.0" width="11.0" height="4.5" fill="#6e4a4a" />
<rect x="1120.0" y="331.5" width="60.0" height="44.3" fill="#151715" opacity="0"/>
<rect x="1179.1" y="231.4" width="20.9" height="139.6" fill="url(#pg)"/>
<path d="M1190.6 236.4V273.4" fill="none" stroke="#b4b4b0" stroke-width="1.2" stroke-dasharray="1.2 2.2"/>
<rect x="1180.5" y="371.0" width="22.5" height="4.8" fill="#0e0e0e" />
<rect x="1360.6" y="232.3" width="21.0" height="138.3" fill="url(#pg)"/>
<path d="M1372.1 237.3V274.3" fill="none" stroke="#b4b4b0" stroke-width="1.2" stroke-dasharray="1.2 2.2"/>
<rect x="1381.0" y="136.2" width="17.6" height="211.8" fill="#bbbfb9" />
<rect x="1381.0" y="136.2" width="1.0" height="211.8" fill="#cdd1cb" />
<path d="M1385.2 139.2V346" fill="none" stroke="#3a3a55" stroke-width="1.4" stroke-dasharray="1.5 10.5" opacity="0.8"/>
<path d="M1385.6 144.2V346" fill="none" stroke="#979b95" stroke-width="1.9" stroke-dasharray="3.2 8.8" opacity="0.85"/>
<path d="M1394.0 139.2V346" fill="none" stroke="#3a3a55" stroke-width="1.4" stroke-dasharray="1.5 10.5" opacity="0.8"/>
<path d="M1394.4 144.2V346" fill="none" stroke="#979b95" stroke-width="1.9" stroke-dasharray="3.2 8.8" opacity="0.85"/>
<rect x="1398.6" y="136.2" width="5.6" height="211.8" fill="#96968f" />
<rect x="1400.5" y="136.2" width="3.7" height="211.8" fill="#b0b0ac" />
<polygon points="1381,348 1404,348 1411,375.8 1375,375.8" fill="#a9a9ab" />
<polygon points="1381,348 1398,348 1398,356 1381,356" fill="#c4c4c4" />
<polygon points="1372,370.6 1392,370.6 1398,375.8 1360,375.8" fill="#222" />
<rect x="1404.2" y="136.2" width="98.5" height="163.8" fill="#d2d2d2" />
<rect x="1404.2" y="136.2" width="3.3" height="239.6" fill="#c3c3bf" />
<rect x="1404.2" y="290" width="98.5" height="85.8" fill="url(#cl)"/>
<polygon points="1418,300 1440,310 1425,375.8 1412,375.8 1412,320" fill="#cfd1d1" filter="url(#b2)"/>
<polygon points="1450,330 1502.7,318 1502.7,360 1440,375.8" fill="#e4e6e6" filter="url(#b2)"/>
<polygon points="1409.7,375.8 1420,367 1432.7,375.8" fill="#4b4b49" />
<polygon points="1436.3,164 1445,164 1470,173 1486.8,170.4 1486.8,220.8 1437,220.8" fill="#6f6f50" />
<polygon points="1436.3,164 1445,164 1470,173 1463,176 1449,179 1437,182" fill="#adada5" />
<polygon points="1437,182 1463,176 1463,220.8 1437,220.8" fill="#69694a" />
<polygon points="1463,176 1486.8,170.4 1486.8,220.8 1463,220.8" fill="#7b7b58" />
<rect x="1440.0" y="190.0" width="4.0" height="5.0" fill="#8e8e5c" />
<rect x="1446.0" y="188.0" width="4.0" height="5.0" fill="#55553a" />
<rect x="1466.0" y="184.0" width="4.0" height="5.0" fill="#9c9c66" />
<rect x="1474.0" y="181.0" width="4.0" height="5.0" fill="#55553a" />
<rect x="1479.0" y="186.0" width="4.0" height="5.0" fill="#a4a470" />
<rect x="1470.0" y="196.0" width="4.0" height="5.0" fill="#5c5c3c" />
<rect x="1441.0" y="204.0" width="4.0" height="5.0" fill="#57573a" />
<rect x="1476.0" y="205.0" width="4.0" height="5.0" fill="#8e8e5c" />
<rect x="1482.0" y="178.0" width="4.0" height="5.0" fill="#b8b88a" />
<rect x="1437.0" y="196.5" width="49.8" height="1.1" fill="#55553a" />
<rect x="1479.5" y="199.0" width="6.5" height="7.0" fill="#d4d4d0" />
<rect x="1480.0" y="206.0" width="6.0" height="7.0" fill="#2c2c2c" />
<polygon points="1447,220.8 1448,203 1451,195.5 1461,193.5 1466,196 1468,204 1464,208 1464,220.8" fill="#a82729" />
<polygon points="1461,193.5 1464,189 1467,191 1468,200 1465,199" fill="#a82729" />
<ellipse cx="1456.3" cy="188.6" rx="4" ry="4.2" fill="#4c4c3a" />
<polygon points="1446,196 1451,192 1453,206 1447,212" fill="#3a3a30" />
<ellipse cx="1462" cy="190" rx="2" ry="2.5" fill="#b89a78" />
<rect x="1437.8" y="222.3" width="64.9" height="40.3" fill="#9b9b99" />
<polygon points="1437.8,222.3 1455,222.3 1440,262.6 1437.8,262.6" fill="#b4b4b2" />
<ellipse cx="1474" cy="246.5" rx="28.5" ry="19.5" fill="#dad9d4" />
<ellipse cx="1474" cy="249.5" rx="24" ry="13.8" fill="#9fa0a8" />
<ellipse cx="1474" cy="250" rx="20" ry="11" fill="#a9aab2" />
<path d="M1461 240L1475 255M1479 238L1476 255" fill="none" stroke="#55555c" stroke-width="1" />
<path d="M1452.3 248.1L1455.2 248.4" fill="none" stroke="#5a5a62" stroke-width="0.8" />
<path d="M1453.3 245.9L1456.1 246.5" fill="none" stroke="#5a5a62" stroke-width="0.8" />
<path d="M1455.1 243.8L1457.6 244.7" fill="none" stroke="#5a5a62" stroke-width="0.8" />
<path d="M1457.5 241.9L1459.7 243.1" fill="none" stroke="#5a5a62" stroke-width="0.8" />
<path d="M1460.5 240.4L1462.4 241.8" fill="none" stroke="#5a5a62" stroke-width="0.8" />
<path d="M1464.0 239.1L1465.4 240.7" fill="none" stroke="#5a5a62" stroke-width="0.8" />
<path d="M1467.9 238.3L1468.7 240.0" fill="none" stroke="#5a5a62" stroke-width="0.8" />
<path d="M1471.9 237.9L1472.2 239.6" fill="none" stroke="#5a5a62" stroke-width="0.8" />
<path d="M1476.1 237.9L1475.8 239.6" fill="none" stroke="#5a5a62" stroke-width="0.8" />
<path d="M1480.1 238.3L1479.3 240.0" fill="none" stroke="#5a5a62" stroke-width="0.8" />
<path d="M1484.0 239.1L1482.6 240.7" fill="none" stroke="#5a5a62" stroke-width="0.8" />
<path d="M1487.5 240.4L1485.6 241.8" fill="none" stroke="#5a5a62" stroke-width="0.8" />
<path d="M1490.5 241.9L1488.3 243.1" fill="none" stroke="#5a5a62" stroke-width="0.8" />
<path d="M1492.9 243.8L1490.4 244.7" fill="none" stroke="#5a5a62" stroke-width="0.8" />
<path d="M1494.7 245.9L1491.9 246.5" fill="none" stroke="#5a5a62" stroke-width="0.8" />
<path d="M1495.7 248.1L1492.8 248.4" fill="none" stroke="#5a5a62" stroke-width="0.8" />
<ellipse cx="1476" cy="256" rx="2" ry="1.3" fill="#e0e0e0" />
<polygon points="1490,226 1494,225.5 1493.5,229.5 1491.5,230.5" fill="#c8a820" />
<rect x="1437.8" y="262.6" width="64.9" height="2.4" fill="#dadada" />
<rect x="1444.3" y="265.0" width="58.4" height="43.0" fill="#a9a9a5" />
<rect x="1444.3" y="265.0" width="58.4" height="4.3" fill="#cbcbc9" />
<rect x="1444.3" y="269.3" width="58.4" height="1.7" fill="#b9b9b5" />
<rect x="1467.3" y="298.0" width="35.4" height="10.0" fill="#b6b6b2" />
<rect x="1467.3" y="298.0" width="35.4" height="2.0" fill="#c8c8c4" />
<ellipse cx="1478.6" cy="290.2" rx="11.6" ry="9.6" fill="#a6a6a8" stroke="#262626" stroke-width="1.6"/>
<path d="M1478.8 283V297" fill="none" stroke="#222" stroke-width="1.1" />
<rect x="1444.3" y="302.6" width="23.0" height="5.4" fill="#3b3b39" />
<polygon points="1435.6,264.7 1448.6,264.7 1448.6,272.8" fill="#d2e01e" />
<polygon points="1435.6,264.7 1448.6,272.8 1435.6,272.8" fill="#2a0c30" />
<polygon points="1441.5,303.5 1452,303 1454,308 1450,312 1442,310" fill="#0c0c0c" />
<ellipse cx="1441.6" cy="309.3" rx="1" ry="1.6" fill="#d8e020" />
<ellipse cx="1453.4" cy="305.8" rx="0.8" ry="1.3" fill="#d8e020" />
<ellipse cx="1488.7" cy="378.8" rx="9" ry="9.5" fill="none" stroke="#2a1a3a" stroke-width="1.3"/>
<path d="M1104 321.5C1120 324 1134 336 1146 350S1170 361 1181 365" fill="none" stroke="#dcdcdc" stroke-width="1.2" />
<path d="M1158 299C1164 295 1172 296 1180 296" fill="none" stroke="#c4c4bc" stroke-width="0.8" />
</g>
<g filter="url(#t1)">
<filter id="t1" x="-5%" y="-20%" width="110%" height="140%"><feGaussianBlur stdDeviation="0.35"/></filter>
<text x="965.5" y="161" font-family="Liberation Mono,DejaVu Sans Mono,monospace" font-weight="bold" font-size="15.4" textLength="73.8" lengthAdjust="spacingAndGlyphs" fill="#f6f6f6" stroke="#333" stroke-width="0.5" paint-order="stroke">02-21-20</text>
<text x="1039.3" y="161" font-family="Liberation Mono,DejaVu Sans Mono,monospace" font-weight="bold" font-size="15.4" textLength="18.4" lengthAdjust="spacingAndGlyphs" fill="#0c0c0c" stroke="none" stroke-width="0.5" paint-order="stroke">24</text>
<text x="1067.9" y="161.6" font-family="Noto Sans CJK SC,WenQuanYi Zen Hei,sans-serif" font-size="14.6" textLength="52.8" lengthAdjust="spacing" fill="#f4f4f4" stroke="#555" stroke-width="0.25" paint-order="stroke">星期三</text>
<text x="1131.5" y="161" font-family="Liberation Mono,DejaVu Sans Mono,monospace" font-weight="bold" font-size="15.4" textLength="27.7" lengthAdjust="spacingAndGlyphs" fill="#0c0c0c" stroke="none" stroke-width="0.5" paint-order="stroke">10:</text>
<text x="1159.1" y="161" font-family="Liberation Mono,DejaVu Sans Mono,monospace" font-weight="bold" font-size="15.4" textLength="46.1" lengthAdjust="spacingAndGlyphs" fill="#f6f6f6" stroke="#333" stroke-width="0.5" paint-order="stroke">15:56</text>
<text x="1351.3" y="360.6" font-family="Liberation Mono,DejaVu Sans Mono,monospace" font-weight="bold" font-size="15.4" textLength="9.2" lengthAdjust="spacingAndGlyphs" fill="#f2f2f2" stroke="#111" stroke-width="0.5" paint-order="stroke">C</text>
<text x="1360.5" y="360.6" font-family="Liberation Mono,DejaVu Sans Mono,monospace" font-weight="bold" font-size="15.4" textLength="73.8" lengthAdjust="spacingAndGlyphs" fill="#0c0c0c" stroke="none" stroke-width="0.5" paint-order="stroke">amera 01</text>
</g>
</svg>
<!-- CAM_END -->
<!-- PNL_START -->
<svg id="pnl" style="left:-11px;top:-17px" width="1526" height="775" viewBox="0 0 1526 775" fill="none" stroke-linecap="round" stroke-linejoin="round">
<path d="M946.5 136V410.9H1503V136" stroke="#c6c6c6" stroke-width="1"/>
<g stroke="#333" stroke-width="1.9"><path d="M987.6 385.9H1001.5L1006.6 391V404.9a2 2 0 0 1-2 2H987.6a2 2 0 0 1-2-2V387.9a2 2 0 0 1 2-2Z"/><path d="M990.6 386V389.2H996V386" stroke-width="1.4"/><path d="M990 397.8H1002.4M990 402.1H997" stroke-width="1.5"/></g>
<g stroke="#333" stroke-width="1.7"><path d="M1059.2 397.6V388.4a3.3 3.3 0 0 1 6.6 0V397.6a5.9 5.9 0 1 1-6.6 0Z"/><circle cx="1062.5" cy="402.4" r="2"/><path d="M1062.5 400.2V391"/></g>
<g stroke="#1c1c1c" stroke-width="1.8" stroke-linejoin="miter" stroke-linecap="butt"><rect x="1114.3" y="386.6" width="21.6" height="17.9"/><path d="M1118.4 394.6V390.6H1122.6M1131.8 396.4V400.5H1127.6"/></g>
<circle cx="1244.8" cy="395.8" r="11.2" stroke="#1c1c1c" stroke-width="1.7"/><circle cx="1244.8" cy="395.8" r="3.1" fill="#1c1c1c"/>
<g stroke="#1c1c1c" stroke-width="1.5"><circle cx="1306.5" cy="396.5" r="5.2"/><circle cx="1306.5" cy="396.5" r="1.8" fill="#1c1c1c" stroke="none"/><path d="M1297.4 391A10.6 10.6 0 0 1 1317.1 396.3"/><path d="M1315.6 401.9A10.6 10.6 0 0 1 1295.9 396.7"/><path d="M1317.3 387.2V396.6M1295.8 396.4V405.8" stroke-width="1.7"/></g>
<rect x="947.7" y="435.6" width="555" height="259.8" rx="2" stroke="#c8c8c8" stroke-width="1"/>
<g stroke="#262626" stroke-width="2.9">
<rect x="967.95" y="456.15" width="24.90" height="24.70" rx="2"/>
<path d="M974.3 468.3H986.5" stroke-width="2.6"/>
<path d="M980.4 462.2V474.4" stroke-width="2.6"/>
<rect x="1087.65" y="456.15" width="24.90" height="24.70" rx="2"/>
<path d="M1094.0 468.3H1106.2" stroke-width="2.6"/>
<rect x="967.95" y="594.25" width="24.90" height="24.70" rx="2"/>
<path d="M974.3 606.4H986.5" stroke-width="2.6"/>
<path d="M980.4 600.3V612.5" stroke-width="2.6"/>
<rect x="1087.65" y="594.25" width="24.90" height="24.70" rx="2"/>
<path d="M1094.0 606.4H1106.2" stroke-width="2.6"/>
<rect x="1023.25" y="483.55" width="34.40" height="34.40" rx="2"/>
<path d="M1040.5 495.2L1049.2 504.1H1031.8Z" stroke-width="3.3"/>
<rect x="1023.25" y="576.45" width="34.40" height="33.70" rx="2"/>
<path d="M1040.5 598.4L1049.2 589.8H1031.8Z" stroke-width="3.3"/>
<rect x="977.25" y="529.95" width="34.50" height="34.00" rx="2"/>
<path d="M988.8 546.6L998 537.8V555.4Z" stroke-width="3.3"/>
<rect x="1069.45" y="529.95" width="34.50" height="34.00" rx="2"/>
<path d="M1092.4 546.6L1083 537.8V555.4Z" stroke-width="3.3"/>
</g>
<rect x="958.2" y="638.3" width="11.4" height="11.2" rx="1.5" fill="#fff" stroke="#b4b4b4" stroke-width="1"/>
<path d="M960.9 644.2L963.3 647L967.2 640.6" stroke="#1a1a1a" stroke-width="1.8"/>
<rect x="1323.5" y="445.8" width="167.8" height="213.4" stroke="#c2c2c2" stroke-width="1"/>
</svg>
<div class="t" style="left:1173.0px;top:365.9px;font-size:19px;line-height:25px;height:25px;font-size:19px;-webkit-text-stroke:0.5px #111">0</div>
<div class="t" style="left:964.5px;top:620.1px;font-size:11px;line-height:14px;height:14px;">Publish</div>
<div class="t" style="left:1032.2px;top:615.7px;font-size:15px;line-height:20px;height:20px;">Hz</div>
<div class="t" style="left:980.5px;top:644.0px;font-size:11px;line-height:14px;height:14px;">PTZ</div>
<div class="inp" style="left:1056px;top:613.2px;width:50.4px;height:25.6px;border-radius:3px"></div>
<div style="left:1093.3px;top:614.8px;width:1px;height:22.9px;background:#c8c8c8"></div>
<div class="t" style="left:1061.0px;top:620.5px;font-size:10px;line-height:13px;height:13px;">10</div>
<svg style="left:1095.5px;top:617px" width="9" height="19" viewBox="0 0 9 19"><path d="M1 6L4.5 2L8 6Z" fill="#555"/><path d="M1 12.5L4.5 16.5L8 12.5Z" fill="#333"/></svg>
<div class="inp" style="left:1029.4px;top:640.4px;width:74.2px;height:18.8px;background:#f2f2f2"></div>
<div class="t" style="left:1034.4px;top:643.8px;font-size:11px;line-height:14px;height:14px;">cam1</div>
<svg style="left:1088.5px;top:647.5px" width="9" height="6" viewBox="0 0 9 6"><path d="M1.3 1L4.5 4.6L7.7 1Z" fill="#555"/></svg>
<div class="t" style="left:1126.0px;top:432.7px;font-size:11px;line-height:14px;height:14px;">P:</div>
<div class="inp" style="left:1143.7px;top:428.3px;width:163.4px;height:21.8px"></div>
<div class="t" style="left:1146.3px;top:432.7px;font-size:11px;line-height:14px;height:14px;color:#a4a4a4">(-180~180◦)</div>
<div class="t" style="left:1126.0px;top:502.6px;font-size:11px;line-height:14px;height:14px;">T:</div>
<div class="inp" style="left:1143.7px;top:498.2px;width:163.4px;height:21.8px"></div>
<div class="t" style="left:1146.3px;top:502.6px;font-size:11px;line-height:14px;height:14px;color:#a4a4a4">(-25~90◦)</div>
<div class="t" style="left:1126.0px;top:572.5px;font-size:11px;line-height:14px;height:14px;">Z:</div>
<div class="inp" style="left:1143.7px;top:568.1px;width:163.4px;height:21.8px"></div>
<div class="t" style="left:1146.3px;top:572.5px;font-size:11px;line-height:14px;height:14px;color:#a4a4a4">(1~20)</div>
<div class="btn" style="left:1153.6px;top:594.9px;width:73.5px;height:21.6px">request</div>
<div class="btn" style="left:1233.1px;top:594.9px;width:73.8px;height:21.6px">reset</div>
<div class="t" style="left:1347.1px;top:647.9px;font-size:16px;line-height:21px;height:21px;">Schematic</div>
<!-- PNL_END -->
<!-- SCH_START -->
<svg id="sch" style="left:1313px;top:429px" width="167" height="212" viewBox="1324 446 167 212">
<defs><linearGradient id="cy" x1="0" y1="0" x2="1" y2="0"><stop offset="0" stop-color="#cdcdcd"/><stop offset="0.2" stop-color="#dfdfdf"/><stop offset="0.7" stop-color="#dadada"/><stop offset="1" stop-color="#cccccc"/></linearGradient><linearGradient id="cy2" x1="0" y1="0" x2="1" y2="0"><stop offset="0" stop-color="#cacaca"/><stop offset="0.3" stop-color="#dcdcdc"/><stop offset="0.7" stop-color="#d8d8d8"/><stop offset="1" stop-color="#c9c9c9"/></linearGradient><linearGradient id="rc" x1="0" y1="0" x2="0" y2="1"><stop offset="0" stop-color="#7c7c7c"/><stop offset="0.5" stop-color="#b0b0b0"/><stop offset="0.62" stop-color="#5a5a5a"/><stop offset="0.75" stop-color="#c4c4c4"/><stop offset="1" stop-color="#d6d6d6"/></linearGradient><filter id="sb" x="-10%" y="-10%" width="120%" height="120%"><feGaussianBlur stdDeviation="0.5"/></filter></defs>
<g filter="url(#sb)">
<path d="M1371.7 597V622C1371.7 631 1450 631 1450 622V597Z" fill="url(#cy2)"/>
<path d="M1381 609.5C1385 611.5 1389 612 1393 611.5" stroke="#f4f4f4" stroke-width="2.2" fill="none"/>
<path d="M1430 610.3H1435" stroke="#f4f4f4" stroke-width="1.8" fill="none"/>
<path d="M1370.5 588V595C1370.5 602 1451 602 1451 595V588Z" fill="#d0d0d0"/>
<path d="M1370.5 593.5C1380 600.5 1440 600.5 1451 593.5" stroke="#8e8e8e" stroke-width="1" fill="none"/>
<path d="M1370.5 596.3C1380 603.2 1440 603.2 1451 596.3" stroke="#a8a8a8" stroke-width="0.9" fill="none"/>
<path d="M1373.7 536V586C1373.7 594 1449.2 594 1449.2 586V520C1449.2 511 1440 509.5 1432 509.5H1410C1404 512 1404 518 1404 536Z" fill="url(#cy)"/>
<path d="M1382 581.5C1392 586.5 1406 586 1416 582" stroke="#f4f4f4" stroke-width="2.6" fill="none"/>
<path d="M1404 537.5C1420 538.5 1436 537.5 1449.2 535" stroke="#8a8a8a" stroke-width="1" fill="none"/>
<path d="M1412 514C1420 510 1440 510 1446 518V532C1436 535 1420 535 1410 534Z" fill="#e6e6e6"/>
<path d="M1373.7 551H1403.5V572.5C1395 574 1382 571 1373.7 564Z" fill="#a2a2a2"/>
<path d="M1374 556C1382 563 1394 565 1403 563.5V569C1394 570.5 1382 568 1374 561Z" fill="#e2e2e2"/>
<path d="M1389 566.5C1394 567.5 1399 567 1403.4 566V572.4C1399 573.5 1394 572.5 1389 570.5Z" fill="#6e6e6e"/>
<path d="M1381.5 503C1390 499 1408 498 1417.5 500C1423 502 1425.5 505 1424.5 508L1412 514C1406 520 1404.5 530 1403.5 541L1398.5 552L1378 550L1370.8 539C1371 525 1375 511 1381.5 503Z" fill="#dcdcdc"/>
<path d="M1398 503C1404 501 1414 501 1420 503L1409 512C1404 518 1402 528 1401.5 540L1397 549C1394 530 1396 515 1398 503Z" fill="#ececec"/>
<path d="M1402.5 500.5L1404 505M1414 500.5L1413 504" stroke="#777" stroke-width="1" fill="none"/>
<ellipse cx="1391.5" cy="512" rx="8.1" ry="12.5" transform="rotate(16 1391.5 512)" fill="#141414"/>
<ellipse cx="1393" cy="512" rx="3" ry="7" transform="rotate(18 1393 512)" fill="#4a4a4a"/>
<ellipse cx="1384.4" cy="541" rx="6.4" ry="8.6" transform="rotate(18 1384.4 541)" fill="#141414"/>
<ellipse cx="1374.9" cy="527.8" rx="3" ry="4.4" transform="rotate(18 1374.9 527.8)" fill="#9a9a9a" stroke="#c4c4c4" stroke-width="0.8"/>
<ellipse cx="1391" cy="528" rx="2.4" ry="3" fill="#a2a2a2"/><ellipse cx="1386.2" cy="528.6" rx="1" ry="1.2" fill="#777"/>
<path d="M1395 548L1401 551L1399 553Z" fill="#444"/>
</g>
<path d="M1360.8 600.6C1339 575 1340 528 1372.5 505.5" stroke="#2db52d" stroke-width="1.7" fill="none"/>
<path d="M1377.4 501.4L1373.8 510.2L1367.6 503.2Z" fill="#2db52d"/>
<path d="M1343.2 539.6C1332 551 1340 566 1372 572C1392 575.5 1412 575.5 1428 573.8" stroke="#d62222" stroke-width="1.7" fill="none"/>
<path d="M1436.4 572.6L1426.6 577.4L1426 568.6Z" fill="#d62222"/>
<text x="1357.8" y="490.2" font-family="Liberation Sans,DejaVu Sans,sans-serif" font-weight="bold" font-size="18.5" letter-spacing="1.1" fill="#111">Tilt</text>
<text x="1438.2" y="568.4" font-family="Liberation Sans,DejaVu Sans,sans-serif" font-weight="bold" font-size="18.5" letter-spacing="1" fill="#111">Pan</text>
<text x="1358.9" y="505" font-family="Liberation Sans,DejaVu Sans,sans-serif" font-weight="bold" font-size="13" fill="#22aa22">+</text>
<text x="1360.5" y="596.2" font-family="Liberation Sans,DejaVu Sans,sans-serif" font-weight="bold" font-size="13" fill="#22aa22">-</text>
<text x="1332.3" y="538.8" font-family="Liberation Sans,DejaVu Sans,sans-serif" font-weight="bold" font-size="13" fill="#d62222">-</text>
<text x="1440.5" y="584" font-family="Liberation Sans,DejaVu Sans,sans-serif" font-weight="bold" font-size="13" fill="#d62222">+</text>
</svg>
<!-- SCH_END -->
<!-- toolbar icons -->
<svg id="tbi" style="left:-11px;top:-17px" width="1526" height="775" viewBox="0 0 1526 775" fill="none" stroke-linecap="round" stroke-linejoin="round">
<g><circle cx="48.3" cy="104.9" r="3.5" fill="none" stroke="#222" stroke-width="1.6"/><path d="M48.30 108.70L48.30 110.90M45.61 107.59L44.06 109.14M44.50 104.90L42.30 104.90M45.61 102.21L44.06 100.66M48.30 101.10L48.30 98.90M50.99 102.21L52.54 100.66M52.10 104.90L54.30 104.90M50.99 107.59L52.54 109.14" stroke="#222" stroke-width="2.0" fill="none" stroke-linecap="butt"/><circle cx="59.5" cy="107" r="2.0" fill="none" stroke="#222" stroke-width="1.3"/><path d="M59.50 109.30L59.50 110.90M57.87 108.63L56.74 109.76M57.20 107.00L55.60 107.00M57.87 105.37L56.74 104.24M59.50 104.70L59.50 103.10M61.13 105.37L62.26 104.24M61.80 107.00L63.40 107.00M61.13 108.63L62.26 109.76" stroke="#222" stroke-width="1.4" fill="none" stroke-linecap="butt"/><rect x="42.4" y="112" width="21.5" height="3.9" fill="#5c5c5c" stroke="none"/><rect x="42.4" y="112" width="21.5" height="1" fill="#222" stroke="none"/></g>
<g stroke="#151515" stroke-width="1.7"><path d="M95.5 102.7H93.6a1.5 1.5 0 0 0-1.5 1.5V114.5a1.5 1.5 0 0 0 1.5 1.5H108.4a1.5 1.5 0 0 0 1.5-1.5V104.2a1.5 1.5 0 0 0-1.5-1.5H105"/><path d="M99.9 108.6C98 105.6 96 103.2 96 100.7a3.9 3.9 0 0 1 7.8 0C103.8 103.2 101.8 105.6 99.9 108.6Z" fill="#151515" stroke-width="0.6"/><circle cx="99.9" cy="100.7" r="1.6" fill="#efefef" stroke="none"/><path d="M93.4 108.5C95.5 113.5 103.5 114 108.6 106" stroke-width="1.2" stroke-dasharray="2.2 1.8" stroke-linecap="butt"/></g>
<g stroke="#151515" stroke-width="1.6"><path d="M141 104.5V100.6a1.6 1.6 0 0 1 1.6-1.6H149.4L153.3 103V113.4a1.6 1.6 0 0 1-1.6 1.6H142.6a1.6 1.6 0 0 1-1.6-1.6V112.6"/><path d="M149.4 99V103H153.3Z" fill="#151515" stroke-width="0.8"/><rect x="137.4" y="106.1" width="11.6" height="5.5" rx="0.8" fill="#151515" stroke="none"/></g>
<text x="138.7" y="110.5" font-family="DejaVu Sans,Liberation Sans,sans-serif" font-size="4.3" font-weight="bold" fill="#9a9a9a" stroke="none">YML</text>
<g stroke="#444" stroke-width="0.85"><ellipse cx="186.3" cy="107.2" rx="8.6" ry="3.5"/><ellipse cx="186.3" cy="107.2" rx="8.6" ry="3.5" transform="rotate(60 186.3 107.2)"/><ellipse cx="186.3" cy="107.2" rx="8.6" ry="3.5" transform="rotate(120 186.3 107.2)"/><circle cx="186.3" cy="107.2" r="2.1"/><circle cx="186.3" cy="107.2" r="0.6" fill="#3c3c3c"/></g>
<g stroke="#151515" stroke-width="1.5"><path d="M224.5 106.5L226.4 102a1.2 1.2 0 0 1 1.1-0.8H232.5a1.2 1.2 0 0 1 1.1 0.8L235 105.4"/><path d="M231.7 111.6H224.3a1.2 1.2 0 0 1-1.2-1.2V107.6a1.2 1.2 0 0 1 1.2-1.2H234.6"/><path d="M224.9 111.8V113.3" stroke-width="2"/><path d="M231.8 99.4H233.9L235.8 103.8a1.5 1.5 0 0 1 1.4 1.4"/><circle cx="226.3" cy="108.9" r="0.7" fill="#151515" stroke="none"/><circle cx="236.4" cy="111.6" r="3.1" stroke-width="1.4"/><path d="M234.3 109.5L238.5 113.7" stroke-width="1.4"/></g>
<rect x="275.6" y="94.2" width="302.4" height="26" rx="9" fill="#efefef" stroke="#8a8a8a" stroke-width="1.8"/>
<g stroke="#555" stroke-width="1.1"><circle cx="560.6" cy="106.8" r="4"/><path d="M563.6 110L565.6 112"/></g>
<g stroke="#3c3c3c" stroke-width="1.3"><path d="M630.2 110.2C630.8 108 630.7 104.5 630.6 101.2L622 97.4L613.4 101.2C613 108 614.5 113.5 622 116.9C623.5 116.2 624.8 115.4 625.8 114.5"/><circle cx="621.9" cy="107.2" r="3.7"/><path d="M624.6 109.9L627.8 112.7"/></g>
<path d="M680.4 99.8V114.4M673.6 107H687.2" stroke="#555" stroke-width="2"/>
<g stroke="#111" stroke-width="2" stroke-linejoin="miter" stroke-linecap="butt"><rect x="725.2" y="98.2" width="19.3" height="15.4" rx="0.8"/><path d="M727.9 102.4H738M727.9 105.9H738M727.9 109.4H738M740 102.4H741.8M740 105.9H741.8M740 109.4H741.8" stroke-width="1.7"/><rect x="729.3" y="114.6" width="11" height="2.2" fill="#777" stroke="none"/></g>
<g stroke="#151515" stroke-width="1.5"><path d="M785.5 103.9H784.2a1.4 1.4 0 0 0-1.4 1.4V111.9a1.4 1.4 0 0 0 1.4 1.4H794.2a1.4 1.4 0 0 0 1.4-1.4V105.3a1.4 1.4 0 0 0-1.4-1.4H792.9"/><path d="M789.2 107.4V99.2M786.3 101.9L789.2 99L792.1 101.9"/></g>
<g stroke="#151515" stroke-width="1.5"><path d="M844 103.9H843a1.4 1.4 0 0 0-1.4 1.4V111.9a1.4 1.4 0 0 0 1.4 1.4H853.3a1.4 1.4 0 0 0 1.4-1.4V105.3a1.4 1.4 0 0 0-1.4-1.4H852.6"/><path d="M848.4 98.6V107.6M845.2 104.8L848.4 108L851.6 104.8"/></g>
<g stroke="#5a5a5a" stroke-width="1.2"><rect x="893.7" y="101.6" width="17.8" height="15.3" rx="1.5"/><path d="M898.9 99.3V103.6M905.8 99.3V103.6"/><path d="M896.8 107.2L897.9 108.2L899.8 106.2M902 107.3H908M902 112H908" stroke-width="1"/><circle cx="898.4" cy="112.2" r="1.4" stroke-width="0.9"/></g>
</svg>
<div class="t" style="left:274.5px;top:84.4px;color:#9c9c9c">please enter the search character</div>
<!-- tree header -->
<div class="t hd" style="left:19.3px">Name</div>
<div class="t hd" style="left:140.6px">Size</div>
<div class="t hd" style="left:278.8px">Type</div>
<div class="t hd" style="left:416.8px">Date Modified</div>
<div class="hline"></div>
<svg style="left:126px;top:120.6px" width="8" height="5" viewBox="0 0 8 5"><path d="M0 4.6 L4 0.2 L8 4.6Z" fill="#4a4a4a"/></svg>
<div id="hl"></div>
<div class="vs" style="left:137.0px"></div>
<div class="vs" style="left:275.8px"></div>
<div class="vs" style="left:414.2px"></div>
<div class="vs" style="left:8.5px;top:134px;height:92px;width:1.8px;background:#c8c8c8"></div>
<!-- tree rows -->
<div style="left:8.5px;top:226px;width:1.4px;height:9px;background:#1d7f90"></div>
<div style="left:18.6px;top:226px;width:1px;height:18.4px;background:#63d2e3"></div>
<div class="br" style="top:141.0px"></div>
<div class="fi" style="top:134.8px"><i style="top:2px;width:7px"></i><i style="top:4px;width:5px"></i><i style="top:6px;width:7px"></i><i style="top:8px;width:6px"></i></div>
<div class="t r" style="left:42.9px;top:137.3px">X30p6waypoint</div>
<div class="t r" style="left:142.5px;top:137.3px">420 bytes</div>
<div class="t r" style="left:280.5px;top:137.3px">yaml File</div>
<div class="t r" style="left:418.9px;top:137.3px">6 Feb 2024 13:44:29</div>
<div class="br" style="top:159.4px"></div>
<div class="fi" style="top:153.2px"><i style="top:2px;width:7px"></i><i style="top:4px;width:5px"></i><i style="top:6px;width:7px"></i><i style="top:8px;width:6px"></i></div>
<div class="t r" style="left:42.9px;top:155.7px">x30p3</div>
<div class="t r" style="left:142.5px;top:155.7px">1.61 KiB</div>
<div class="t r" style="left:280.5px;top:155.7px">yaml File</div>
<div class="t r" style="left:418.9px;top:155.7px">20 Feb 2024 10:49:39</div>
<div class="br" style="top:177.9px"></div>
<div class="fi" style="top:171.7px"><i style="top:2px;width:7px"></i><i style="top:4px;width:5px"></i><i style="top:6px;width:7px"></i><i style="top:8px;width:6px"></i></div>
<div class="t r" style="left:42.9px;top:174.2px">X30P2</div>
<div class="t r" style="left:142.5px;top:174.2px">2.61 KiB</div>
<div class="t r" style="left:280.5px;top:174.2px">yaml File</div>
<div class="t r" style="left:418.9px;top:174.2px">20 Feb 2024 16:01:12</div>
<div class="br" style="top:196.3px"></div>
<div class="fi" style="top:190.1px"><i style="top:2px;width:7px"></i><i style="top:4px;width:5px"></i><i style="top:6px;width:7px"></i><i style="top:8px;width:6px"></i></div>
<div class="t r" style="left:42.9px;top:192.6px">X30p1</div>
<div class="t r" style="left:142.5px;top:192.6px">2.45 KiB</div>
<div class="t r" style="left:280.5px;top:192.6px">yaml File</div>
<div class="t r" style="left:418.9px;top:192.6px">20 Feb 2024 15:55:24</div>
<div class="br" style="top:214.8px"></div>
<div class="fi" style="top:208.6px"><i style="top:2px;width:7px"></i><i style="top:4px;width:5px"></i><i style="top:6px;width:7px"></i><i style="top:8px;width:6px"></i></div>
<div class="t r" style="left:42.9px;top:211.1px">X30charge</div>
<div class="t r" style="left:142.5px;top:211.1px">408 bytes</div>
<div class="t r" style="left:280.5px;top:211.1px">yaml File</div>
<div class="t r" style="left:418.9px;top:211.1px">19 Feb 2024 16:02:44</div>
<div class="br brs" style="top:233.2px"></div>
<div class="fi fis" style="top:227.0px"><i style="top:2px;width:7px"></i><i style="top:4px;width:5px"></i><i style="top:6px;width:7px"></i><i style="top:8px;width:6px"></i></div>
<div class="t r sel" style="left:42.9px;top:229.5px">EG_X30_charge</div>
<div class="t r sel" style="left:142.5px;top:229.5px">407 bytes</div>
<div class="t r sel" style="left:280.5px;top:229.5px">yaml File</div>
<div class="t r sel" style="left:418.9px;top:229.5px">21 Feb 2024 10:08:52</div>
<!-- bottom toolbar / status bar -->
<svg style="left:0;top:690px" width="1500" height="53" viewBox="11 707 1500 53">
<g fill="#c4c4c4"><rect x="16.2" y="717" width="1" height="1"/><rect x="18.4" y="719.8" width="1" height="1"/><rect x="16.2" y="722.6" width="1" height="1"/><rect x="18.4" y="725.4" width="1" height="1"/><rect x="16.2" y="728.2" width="1" height="1"/><rect x="18.4" y="728.2" width="1" height="1"/></g>
<path d="M29.5 720.6H44.5L46.9 727.4V730.2Q46.9 731.2 45.9 731.2H27.9Q26.9 731.2 26.9 730.2V727.4Z" fill="#e3e3e1" stroke="#a9aaa6" stroke-width="0.8"/>
<path d="M26.9 727.6H46.9V730.2Q46.9 731.2 45.9 731.2H27.9Q26.9 731.2 26.9 730.2Z" fill="#b9bab6"/>
<ellipse cx="37.3" cy="723.4" rx="3.4" ry="1.4" fill="#b4b5b1"/>
<rect x="36.3" y="716" width="1.9" height="7.4" fill="#9fa09c"/>
<circle cx="37.1" cy="714.4" r="3.7" fill="#e8751f"/><circle cx="36.2" cy="713.4" r="1.4" fill="#f4a261"/>
<ellipse cx="30.6" cy="725.6" rx="1.5" ry="1" fill="#e8751f"/>
<rect x="11" y="738.2" width="1500" height="1" fill="#c2c2c2"/>
<g fill="#bdbdbd"><rect x="1507" y="752" width="1" height="1"/><rect x="1507" y="755" width="1" height="1"/><rect x="1504" y="755" width="1" height="1"/><rect x="1507" y="758" width="1" height="1"/><rect x="1504" y="758" width="1" height="1"/><rect x="1501" y="758" width="1" height="1"/></g>
</svg>
<div class="t" style="left:38.9px;top:699.3px">Virtual Joystic...</div>
<!-- splitter handle -->
<svg style="left:922px;top:364px" width="4" height="16" viewBox="0 0 4 16"><g fill="#c6c6c6"><rect x="1" y="1" width="1" height="1"/><rect x="1" y="4" width="1" height="1"/><rect x="1" y="7" width="1" height="1"/><rect x="1" y="10" width="1" height="1"/><rect x="1" y="13" width="1" height="1"/></g></svg>
<!-- title bar buttons -->
<svg style="left:1410px;top:4px" width="90" height="26" viewBox="1421 21 90 26">
<rect x="1428.2" y="35.2" width="7.8" height="1.5" fill="#cfcfcf"/>
<rect x="1459.9" y="30.6" width="6.6" height="6.6" fill="none" stroke="#d8d8d8" stroke-width="1.3"/>
<circle cx="1494.5" cy="33.4" r="8.7" fill="#e95420"/>
<path d="M1491.4 30.3L1497.6 36.5M1497.6 30.3L1491.4 36.5" stroke="#fff" stroke-width="1.4" stroke-linecap="round" fill="none"/>
</svg>
</div>
</body>
</html>
